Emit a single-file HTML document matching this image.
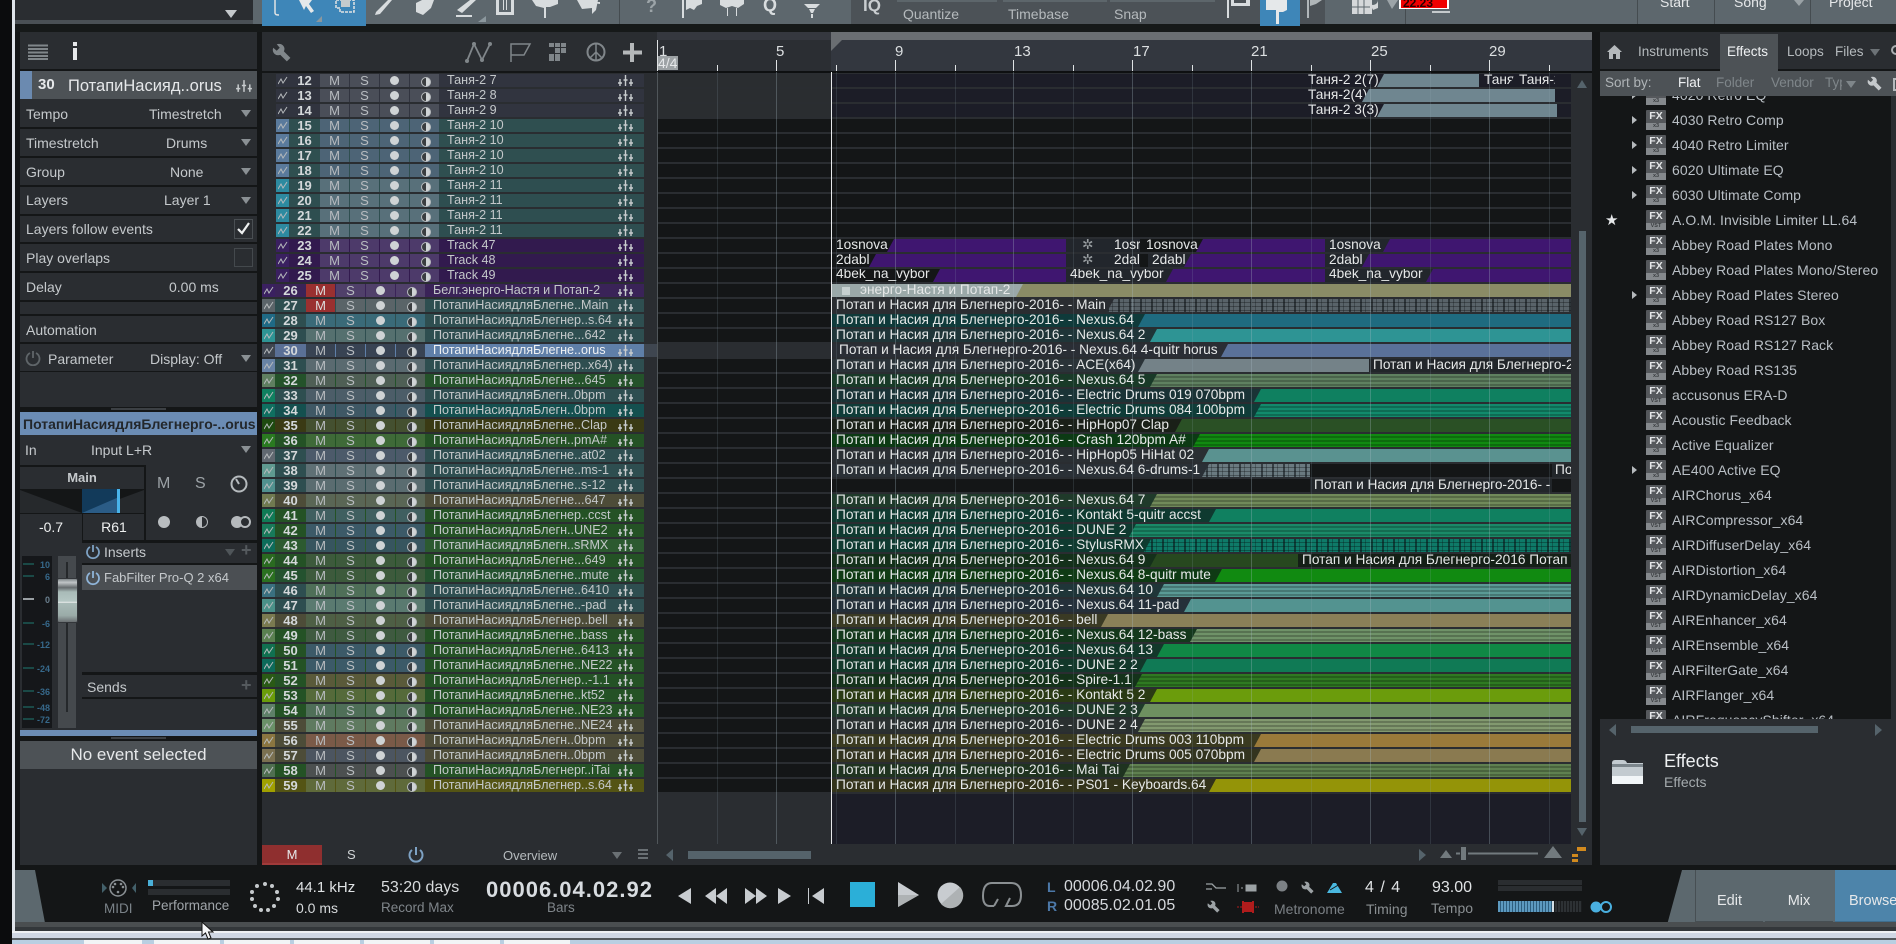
<!DOCTYPE html>
<html><head><meta charset="utf-8"><title>Studio One</title>
<style>
*{box-sizing:border-box;margin:0;padding:0}
html,body{width:1896px;height:944px;overflow:hidden;background:#141617;font-family:"Liberation Sans","DejaVu Sans",sans-serif;color:#c5c9cc}
.a{position:absolute}
#app{position:absolute;left:0;top:0;width:1896px;height:944px;overflow:hidden;background:#141617}
.lbl{position:absolute;white-space:nowrap;font-size:14px;line-height:16px}
.sep{position:absolute;left:20px;width:237px;height:2px;background:#141617}
.dd{position:absolute;width:0;height:0;border-left:5px solid transparent;border-right:5px solid transparent;border-top:7px solid #8a9094}
/* tracks */
.r{position:absolute;height:13px;display:flex;font-size:12.6px;line-height:13px;color:#c4c8ca;left:262px;width:382px;background:var(--n)}
.r.in{left:276px;width:368px}
.r i{display:block;width:13px;background:var(--i);position:relative}
.r i svg{position:absolute;left:2px;top:2px;width:10px;height:9px}
.r b{display:block;width:31px;text-align:center;font-size:13px;font-weight:bold;color:#d4d8da}
.r u{display:block;width:29px;margin-right:1px;background:var(--b);text-align:center;text-decoration:none;font-size:13px;position:relative;color:#b8bcc0}
.r u.rd{background:#9a3030;color:#ddd}
.r u.d:after{content:"";position:absolute;left:10px;top:2px;width:9px;height:9px;border-radius:50%;background:#cfd3d5}
.r u.h:after{content:"";position:absolute;left:11px;top:3px;width:8px;height:8px;border-radius:50%;border:1px solid #b9bdc0;background:linear-gradient(90deg,#3a3d40 50%,#d0d4d6 50%)}
.r span{display:block;flex:1;padding-left:7px;white-space:nowrap;overflow:hidden;margin-right:22px}
.r svg.m{position:absolute;right:10px;top:0;width:17px;height:13px}
/* clips */
.c{position:absolute;height:13px;overflow:hidden}
.c p{position:absolute;left:0;top:0;height:13px;padding-left:4px;font-size:13.7px;line-height:12px;color:#e6e8e8;white-space:nowrap;overflow:hidden;clip-path:polygon(0 0,100% 0,calc(100% - 7px) 100%,0 100%)}
.st{background-image:repeating-linear-gradient(180deg,rgba(0,0,0,0) 0 2px,rgba(0,0,0,.22) 2px 4px)}
.no{background-image:repeating-linear-gradient(90deg,rgba(10,15,18,.55) 0 2px,rgba(0,0,0,0) 2px 5px,rgba(10,15,18,.3) 5px 6px,rgba(0,0,0,0) 6px 11px),repeating-linear-gradient(180deg,rgba(0,0,0,0) 0 3px,rgba(0,0,0,.3) 3px 4px)}
.g{position:absolute;top:72px;width:1px;height:772px;background:rgba(170,190,200,.3)}
.g.h{background:rgba(150,175,185,.16)}
.t{position:absolute;top:40px;width:1px;background:#dfe2e4}
.tx{position:absolute;top:43px;font-size:15px;line-height:18px;color:#dcdfe1}
/* browser */
#list{position:absolute;left:1600px;top:96px;width:291px;height:623px;overflow:hidden;background:#141617}
.it{position:relative;height:25px;padding-left:72px;font-size:14px;letter-spacing:.08px;line-height:25px;color:#b9bfc5;white-space:nowrap}
.fx{position:absolute;left:46px;top:2px;width:20px;height:20px;background:#55585c;font:bold 10.5px/12px "Liberation Sans",sans-serif;color:#e6e8ea;text-align:center;display:block;font-style:normal;border-radius:1px;letter-spacing:0}
.fx s{position:absolute;left:0;bottom:0;width:20px;height:7px;background:#85898d;font:bold 5.5px/7px "Liberation Sans",sans-serif;color:#3a3d40;text-decoration:none}
.it.ar:before{content:"";position:absolute;left:32px;top:8px;border-left:5px solid #b5b9bc;border-top:4px solid transparent;border-bottom:4px solid transparent}
.hd{font-size:13.5px;position:absolute;top:44px;line-height:16px;white-space:nowrap}
.so{font-size:13.5px;position:absolute;top:75px;line-height:16px;color:#7f868a;white-space:nowrap}
.tr{position:absolute;white-space:nowrap;line-height:16px}
.vb{position:absolute;top:870px;height:55px;background:#5c686e;color:#e6e8ea;font-size:14.5px;line-height:62px;text-align:center;border-bottom:4px solid #474f53}
</style></head><body>
<div id="app">
<svg width="0" height="0" style="position:absolute"><defs>
<symbol id="w" viewBox="0 0 10 9"><path d="M0 8 L3 3 L5 7 L9 1" fill="none" stroke="#b5b9bb" stroke-width="1"/></symbol>
<symbol id="mt" viewBox="0 0 17 13"><path d="M3 12V5M8.500 12V1M14 12V5M1 9H5M6.500 6H10.500M12 9H16" fill="none" stroke="#c8ccce" stroke-width="1.400"/></symbol>
<symbol id="wr" viewBox="0 0 16 16"><path d="M1 4L4 6.500 6.500 4 4 1Q8 0 10 3 11 5 10 7L15.500 12.500 12.500 15.500 7 10Q4 11 2 9 0 7 1 4Z"/></symbol>
</defs></svg>

<!-- window frame -->
<div class="a" style="left:0;top:0;width:12px;height:944px;background:#0b0c0d"></div>
<div class="a" style="left:12px;top:0;width:3px;height:932px;background:#dfe4ea"></div>
<div class="a" style="left:15px;top:24px;width:1881px;height:8px;background:#161919"></div>

<!-- top bar -->
<div class="a" style="left:15px;top:0;width:1881px;height:24px;background:#5d676d"></div>
<div class="a" style="left:15px;top:0;width:238px;height:20px;background:#2a2d31"></div>
<div class="a" style="left:15px;top:20px;width:238px;height:4px;background:#4a5055"></div>
<div class="dd" style="left:225px;top:10px;border-left-width:6px;border-right-width:6px;border-top:8px solid #c5c9cc"></div>
<div class="a" style="left:262px;top:0;width:104px;height:26px;background:#3e86b8"></div>
<div class="a" style="left:851px;top:0;width:474px;height:24px;background:#4c5257"></div>
<div class="a" style="left:1260px;top:0;width:40px;height:26px;background:#3e86b8"></div>
<div class="a" style="left:619px;top:0;width:1px;height:24px;background:#454c50"></div>
<div class="a" style="left:1405px;top:0;width:1px;height:24px;background:#454c50"></div>
<div class="a" style="left:1637px;top:0;width:1px;height:24px;background:#454c50"></div>
<div class="a" style="left:1714px;top:0;width:1px;height:24px;background:#454c50"></div>
<div class="a" style="left:1810px;top:0;width:1px;height:24px;background:#454c50"></div>
<div class="a" style="left:897px;top:0;width:100px;height:2px;background:#5d666b"></div>
<div class="a" style="left:1003px;top:0;width:104px;height:2px;background:#5d666b"></div>
<div class="a" style="left:1110px;top:0;width:105px;height:2px;background:#5d666b"></div>
<svg class="a" style="left:0;top:0" width="1896" height="32" viewBox="0 0 1896 32">
<g fill="#d8dcde" stroke="none">
<path d="M299 0H312L309 4 314 11 311 13 306 6 304 10Z" fill="#e6e9ea"/>
<path d="M336 0H354V12H340V8H336Z" fill="none" stroke="#e0e3e4" stroke-width="1.500" stroke-dasharray="3 1"/>
<path d="M341 0H350V7H341Z" fill="#c5cbcd"/>
<path d="M316 22L322 16V22Z" fill="#8b979d"/>
<path d="M376 12L388 0H392L380 14 375 15Z"/>
<path d="M416 3L422 0H434L431 8 423 15 416 12Z"/>
<path d="M457 10L470 0H476L462 13ZM456 15H472V17H456Z"/>
<path d="M478 22L486 16V22Z" fill="#8b979d"/>
<path d="M496 0H514V15H496ZM499 0V12H511V0Z" fill-rule="evenodd"/><path d="M503 0H504V10H503ZM506 0H507V10H506Z"/>
<path d="M532 0H558V4L550 7H546V18H544V8L536 6Z"/>
<path d="M577 0H598L596 10 592 14V8L582 9Z"/><path d="M586 2H600V4Z"/>
<text x="646" y="12" font-family="Liberation Sans" font-size="18" font-weight="bold" fill="#9ca4a8">?</text>
<path d="M682 0H684V18H682ZM686 0H702V4L697 6 694 10 690 8 686 10Z"/>
<path d="M720 0H744V4L738 8 732 6 726 8 720 5Z"/><path d="M727 8H728V16H727ZM736 8H737V16H736Z"/>
<text x="763" y="11" font-family="Liberation Sans" font-size="18" font-weight="bold" fill="#d8dcde">Q</text>
<path d="M804 4H820L816 8H808ZM809 9H815L813 13H811ZM811 14H813V18H811Z"/>
<text x="863" y="11" font-family="Liberation Sans" font-size="17" font-weight="bold" fill="#c9cdd0">IQ</text>
<path d="M1227 0H1229V18H1227ZM1231 0H1250V6H1231ZM1234 0H1246V3H1234Z" fill-rule="evenodd"/>
<path d="M1266 0H1287V10L1283 12H1279V24H1276V10H1266Z" fill="#e5e8ea"/>
<path d="M1307 0H1309V18H1307ZM1310 0H1322L1316 4 1310 6Z" fill="#b0b6b9"/>
<path d="M1352 0H1372V14H1352Z" fill="#d5d8da"/><path d="M1358 0V14M1364 0V14M1352 7H1370" stroke="#5d676d" fill="none"/>
<path d="M1368 0A5 5 0 0 0 1378 0V8L1373 10Z" fill="#d5d8da"/>
<path d="M1387 0H1398L1392 9Z" fill="#9ca4a8"/>
</g>
<path d="M275 0V13Q275 15 279 15" fill="none" stroke="#e0e3e4" stroke-width="1.500"/>
<rect x="1399" y="0" width="50" height="9" fill="#fff"/><rect x="1401" y="0" width="46" height="8" fill="#f00000"/>
<text x="1403" y="7" font-family="Liberation Sans" font-size="12" font-weight="bold" fill="#2a0000">22.23</text>
<rect x="1432" y="11" width="18" height="2" fill="#c5cacc"/>
</svg>
<div class="tr" style="left:903px;top:6px;font-size:14px;color:#b5babd">Quantize</div>
<div class="tr" style="left:1008px;top:6px;font-size:14px;color:#b5babd">Timebase</div>
<div class="tr" style="left:1114px;top:6px;font-size:14px;color:#b5babd">Snap</div>
<div class="tr" style="left:1660px;top:-6px;font-size:14px;color:#e6e8ea">Start</div>
<div class="tr" style="left:1734px;top:-6px;font-size:14px;color:#e6e8ea">Song</div>
<div class="dd" style="left:1794px;top:0;border-top:6px solid #9aa2a6"></div>
<div class="tr" style="left:1829px;top:-6px;font-size:14px;color:#e6e8ea">Project</div>

<!-- left inspector -->
<div class="a" style="left:20px;top:32px;width:237px;height:833px;background:#2a2d31"></div>
<svg class="a" style="left:20px;top:40px" width="70" height="24" viewBox="0 0 70 24"><path d="M8 5.500H28M8 9H28M8 12.500H28M8 16H28M8 19H28" stroke="#80868a" stroke-width="2"/><rect x="53" y="2" width="4" height="4" fill="#e6e8ea"/><rect x="53" y="8" width="4" height="12" fill="#e6e8ea"/></svg>
<div class="a" style="left:20px;top:69px;width:237px;height:2px;background:#141617"></div>
<div class="a" style="left:20px;top:71px;width:237px;height:28px;background:#4d5256"></div>
<div class="a" style="left:20px;top:71px;width:12px;height:28px;background:#6b8ab0"></div>
<div class="tr" style="left:38px;top:77px;font-size:15px;font-weight:bold;color:#e6e8ea">30</div>
<div class="tr" style="left:68px;top:78px;font-size:16.500px;color:#e6e8ea">ПотапиНасияд..orus</div>
<svg class="a" style="left:235px;top:79px" width="18" height="14"><use href="#mt"/></svg>

<div class="lbl" style="left:26px;top:106px">Tempo</div><div class="lbl" style="left:149px;top:106px">Timestretch</div><div class="dd" style="left:241px;top:110px"></div>
<div class="sep" style="top:127px"></div>
<div class="lbl" style="left:26px;top:135px">Timestretch</div><div class="lbl" style="left:166px;top:135px">Drums</div><div class="dd" style="left:241px;top:139px"></div>
<div class="sep" style="top:156px"></div>
<div class="lbl" style="left:26px;top:164px">Group</div><div class="lbl" style="left:170px;top:164px">None</div><div class="dd" style="left:241px;top:168px"></div>
<div class="sep" style="top:185px"></div>
<div class="lbl" style="left:26px;top:192px">Layers</div><div class="lbl" style="left:164px;top:192px">Layer 1</div><div class="dd" style="left:241px;top:197px"></div>
<div class="sep" style="top:214px"></div>
<div class="lbl" style="left:26px;top:221px">Layers follow events</div>
<div class="a" style="left:234px;top:219px;width:19px;height:20px;border:1px solid #4a4f53"></div>
<svg class="a" style="left:236px;top:221px" width="15" height="15"><path d="M2 8L6 12 13 2" fill="none" stroke="#eef0f0" stroke-width="2.200"/></svg>
<div class="sep" style="top:242px"></div>
<div class="lbl" style="left:26px;top:250px">Play overlaps</div>
<div class="a" style="left:234px;top:248px;width:19px;height:19px;border:1px solid #44494d"></div>
<div class="sep" style="top:271px"></div>
<div class="lbl" style="left:26px;top:279px">Delay</div><div class="lbl" style="left:169px;top:279px">0.00 ms</div>
<div class="sep" style="top:300px"></div>
<div class="sep" style="top:314px"></div>
<div class="lbl" style="left:26px;top:322px">Automation</div>
<div class="sep" style="top:342px"></div>
<svg class="a" style="left:25px;top:350px" width="16" height="16"><path d="M5 3A6.500 6.500 0 1 0 11 3M8 1V8" fill="none" stroke="#5f6569" stroke-width="1.800"/></svg>
<div class="lbl" style="left:48px;top:351px">Parameter</div><div class="lbl" style="left:150px;top:351px">Display: Off</div><div class="dd" style="left:241px;top:355px"></div>
<div class="sep" style="top:371px;height:1px"></div>
<div class="a" style="left:20px;top:407px;width:237px;height:5px;background:#141617"></div>
<div class="a" style="left:111px;top:408px;width:55px;height:2px;background:#3c4044"></div>
<div class="a" style="left:20px;top:412px;width:237px;height:23px;background:#6b8cb4"></div>
<div class="tr" style="left:23px;top:416px;width:232px;font-size:14px;font-weight:bold;color:#23272b;overflow:hidden">ПотапиНасиядляБлегнерго-..orus</div>
<div class="lbl" style="left:25px;top:442px">In</div><div class="lbl" style="left:91px;top:442px">Input L+R</div><div class="dd" style="left:241px;top:446px"></div>
<div class="a" style="left:20px;top:465px;width:126px;height:76px;border-right:2px solid #141617;border-top:2px solid #141617"></div>
<div class="tr" style="left:20px;top:470px;width:124px;text-align:center;font-size:13px;font-weight:bold">Main</div>
<svg class="a" style="left:20px;top:489px" width="125" height="25"><rect width="125" height="25" fill="#141617"/><path d="M0 1L62 24H0Z" fill="#26292c"/><path d="M124 1L62 24H124Z" fill="#26292c"/><rect x="62" width="37" height="24" fill="#123a5a"/><path d="M62 24L99 8V24Z" fill="#2b5c86"/><rect x="97" width="3" height="24" fill="#48b3ea"/></svg>
<div class="a" style="left:82px;top:513px;width:1px;height:28px;background:#141617"></div>
<div class="tr" style="left:20px;top:519px;width:62px;text-align:center;font-size:14px;color:#eef0f0">-0.7</div>
<div class="tr" style="left:83px;top:519px;width:62px;text-align:center;font-size:14px;color:#eef0f0">R61</div>
<div class="tr" style="left:157px;top:476px;font-size:16px;color:#9ca2a6">M</div>
<div class="tr" style="left:195px;top:476px;font-size:16px;color:#9ca2a6">S</div>
<svg class="a" style="left:229px;top:474px" width="20" height="20"><circle cx="10" cy="10" r="7.500" fill="none" stroke="#b5babd" stroke-width="2"/><path d="M10 10L7 5" stroke="#b5babd" stroke-width="2"/></svg>
<svg class="a" style="left:155px;top:512px" width="100" height="20"><circle cx="9" cy="10" r="6" fill="#b9bdc0"/><circle cx="47" cy="10" r="5.500" fill="#2a2d31" stroke="#b5b9bc"/><path d="M47 4.500A5.500 5.500 0 0 0 47 15.500Z" fill="#b5b9bc"/><circle cx="82" cy="10" r="6" fill="#b5b9bc"/><circle cx="90" cy="10" r="5" fill="#2a2d31" stroke="#b5b9bc" stroke-width="2"/></svg>
<div class="a" style="left:82px;top:540px;width:175px;height:3px;background:#141617"></div>
<svg class="a" style="left:85px;top:544px" width="16" height="16"><path d="M5 3A6 6 0 1 0 11 3M8 1V8" fill="none" stroke="#7ea2c4" stroke-width="1.800"/></svg>
<div class="lbl" style="left:104px;top:544px">Inserts</div>
<div class="dd" style="left:225px;top:549px;border-top-color:#4f5559"></div>
<div class="tr" style="left:241px;top:542px;font-size:18px;font-weight:bold;color:#555a5e">+</div>
<div class="a" style="left:82px;top:563px;width:175px;height:2px;background:#141617"></div>
<div class="a" style="left:82px;top:565px;width:175px;height:25px;background:#4b4f53"></div>
<svg class="a" style="left:85px;top:570px" width="16" height="16"><path d="M5 3A6 6 0 1 0 11 3M8 1V8" fill="none" stroke="#8fb4d8" stroke-width="1.800"/></svg>
<div class="lbl" style="left:104px;top:570px;font-size:13px">FabFilter Pro-Q 2 x64</div>
<div class="a" style="left:82px;top:672px;width:175px;height:3px;background:#141617"></div>
<div class="lbl" style="left:87px;top:679px">Sends</div>
<div class="tr" style="left:241px;top:677px;font-size:18px;font-weight:bold;color:#555a5e">+</div>
<div class="a" style="left:82px;top:697px;width:175px;height:2px;background:#141617"></div>

<!-- fader -->
<div class="a" style="left:22px;top:556px;width:30px;height:172px;background:#15171a"></div>
<div class="a" style="left:58px;top:556px;width:18px;height:172px;background:#45494d"></div>
<div class="a" style="left:66px;top:562px;width:2px;height:150px;background:#25282b"></div>
<svg class="a" style="left:22px;top:556px" width="30" height="172"><g stroke="#1d5a55" stroke-width="1.500"><path d="M1 8H12M1 20H12M1 43H12M1 67H12M1 88H12M1 112H12M1 135H12M1 151H12M1 163H12"/></g><path d="M1 43H12" stroke="#9aa0a4" stroke-width="2"/><g font-family="Liberation Sans" font-size="9" font-weight="bold" fill="#36688a" text-anchor="end"><text x="28" y="12">10</text><text x="28" y="24">6</text><text x="28" y="47" fill="#6a7f8e">0</text><text x="28" y="71">-6</text><text x="28" y="92">-12</text><text x="28" y="116">-24</text><text x="28" y="139">-36</text><text x="28" y="155">-48</text><text x="28" y="167">-72</text></g></svg>
<div class="a" style="left:57px;top:578px;width:21px;height:45px;border-radius:2px;background:linear-gradient(180deg,#7f8588 0,#c0c5c7 8%,#666b6e 20%,#a9bbb8 30%,#b5c7c4 52%,#f0f2f2 54%,#a9bbb8 56%,#9aaba8 85%,#6a6f72 100%);border:1px solid #33363a"></div>
<div class="a" style="left:20px;top:730px;width:237px;height:6px;background:#6b8cb4"></div>
<div class="a" style="left:20px;top:736px;width:237px;height:5px;background:#141617"></div>
<div class="a" style="left:111px;top:737px;width:55px;height:2px;background:#3c4044"></div>
<div class="a" style="left:20px;top:741px;width:237px;height:28px;background:#4d5256"></div>
<div class="tr" style="left:20px;top:747px;width:237px;text-align:center;font-size:17px;color:#e6e8ea">No event selected</div>

<!-- track column -->
<div class="a" style="left:262px;top:32px;width:395px;height:833px;background:#2a2d31"></div>
<div class="a" style="left:262px;top:71px;width:395px;height:2px;background:#141617"></div>
<svg class="a" style="left:272px;top:43px;fill:#80868a" width="19" height="19"><use href="#wr"/></svg>
<svg class="a" style="left:262px;top:38px" width="395" height="30" viewBox="262 38 395 30"><g fill="none" stroke="#80868a" stroke-width="2"><path d="M467 61L474 44 482 60 490 44" stroke-width="1.800"/><path d="M511 62V44H530L524 55H511" stroke-width="1.500"/><circle cx="596" cy="52" r="8.500" stroke-width="2"/><path d="M596 44V60M596 52L590 58M596 52L602 58" stroke-width="1.500"/></g><g fill="#80868a"><circle cx="474" cy="44" r="2"/><circle cx="467" cy="61" r="2"/><circle cx="482" cy="60" r="2"/><circle cx="490" cy="44" r="2"/><rect x="549" y="43" width="5" height="4"/><rect x="555" y="43" width="5" height="4"/><rect x="561" y="43" width="5" height="4"/><rect x="555" y="48" width="5" height="5"/><rect x="561" y="48" width="5" height="5"/><rect x="549" y="54" width="5" height="7"/><rect x="555" y="54" width="5" height="7"/></g><path d="M632 43V62M623 52.500H642" stroke="#b5b8ba" stroke-width="4"/></svg>

<div class="r in" style="top:74px;--n:#31343f;--b:#4a4e58;--i:#31343f"><i><svg><use href="#w"/></svg></i><b>12</b><u>M</u><u>S</u><u class="d"></u><u class="h"></u><span>Таня-2 7</span><svg class="m"><use href="#mt"/></svg></div>
<div class="r in" style="top:89px;--n:#31343f;--b:#4a4e58;--i:#31343f"><i><svg><use href="#w"/></svg></i><b>13</b><u>M</u><u>S</u><u class="d"></u><u class="h"></u><span>Таня-2 8</span><svg class="m"><use href="#mt"/></svg></div>
<div class="r in" style="top:104px;--n:#31343f;--b:#4a4e58;--i:#31343f"><i><svg><use href="#w"/></svg></i><b>14</b><u>M</u><u>S</u><u class="d"></u><u class="h"></u><span>Таня-2 9</span><svg class="m"><use href="#mt"/></svg></div>
<div class="r in" style="top:119px;--n:#2f4f50;--b:#4d6476;--i:#5a7a9c"><i><svg><use href="#w"/></svg></i><b>15</b><u>M</u><u>S</u><u class="d"></u><u class="h"></u><span>Таня-2 10</span><svg class="m"><use href="#mt"/></svg></div>
<div class="r in" style="top:134px;--n:#2f4f50;--b:#4d6476;--i:#5a7a9c"><i><svg><use href="#w"/></svg></i><b>16</b><u>M</u><u>S</u><u class="d"></u><u class="h"></u><span>Таня-2 10</span><svg class="m"><use href="#mt"/></svg></div>
<div class="r in" style="top:149px;--n:#2f4f50;--b:#4d6476;--i:#5a7a9c"><i><svg><use href="#w"/></svg></i><b>17</b><u>M</u><u>S</u><u class="d"></u><u class="h"></u><span>Таня-2 10</span><svg class="m"><use href="#mt"/></svg></div>
<div class="r in" style="top:164px;--n:#2f4f50;--b:#4d6476;--i:#5a7a9c"><i><svg><use href="#w"/></svg></i><b>18</b><u>M</u><u>S</u><u class="d"></u><u class="h"></u><span>Таня-2 10</span><svg class="m"><use href="#mt"/></svg></div>
<div class="r in" style="top:179px;--n:#2e4e50;--b:#58707a;--i:#2d8aa0"><i><svg><use href="#w"/></svg></i><b>19</b><u>M</u><u>S</u><u class="d"></u><u class="h"></u><span>Таня-2 11</span><svg class="m"><use href="#mt"/></svg></div>
<div class="r in" style="top:194px;--n:#2e4e50;--b:#58707a;--i:#2d8aa0"><i><svg><use href="#w"/></svg></i><b>20</b><u>M</u><u>S</u><u class="d"></u><u class="h"></u><span>Таня-2 11</span><svg class="m"><use href="#mt"/></svg></div>
<div class="r in" style="top:209px;--n:#2e4e50;--b:#58707a;--i:#2d8aa0"><i><svg><use href="#w"/></svg></i><b>21</b><u>M</u><u>S</u><u class="d"></u><u class="h"></u><span>Таня-2 11</span><svg class="m"><use href="#mt"/></svg></div>
<div class="r in" style="top:224px;--n:#2e4e50;--b:#58707a;--i:#2d8aa0"><i><svg><use href="#w"/></svg></i><b>22</b><u>M</u><u>S</u><u class="d"></u><u class="h"></u><span>Таня-2 11</span><svg class="m"><use href="#mt"/></svg></div>
<div class="r in" style="top:239px;--n:#321a4e;--b:#4d3a6a;--i:#3a2060"><i><svg><use href="#w"/></svg></i><b>23</b><u>M</u><u>S</u><u class="d"></u><u class="h"></u><span>Track 47</span><svg class="m"><use href="#mt"/></svg></div>
<div class="r in" style="top:254px;--n:#321a4e;--b:#4d3a6a;--i:#3a2060"><i><svg><use href="#w"/></svg></i><b>24</b><u>M</u><u>S</u><u class="d"></u><u class="h"></u><span>Track 48</span><svg class="m"><use href="#mt"/></svg></div>
<div class="r in" style="top:269px;--n:#321a4e;--b:#4d3a6a;--i:#3a2060"><i><svg><use href="#w"/></svg></i><b>25</b><u>M</u><u>S</u><u class="d"></u><u class="h"></u><span>Track 49</span><svg class="m"><use href="#mt"/></svg></div>
<div class="r" style="top:284px;--n:#3a2358;--b:#50406a;--i:#3a2060"><i><svg><use href="#w"/></svg></i><b>26</b><u class="rd">M</u><u>S</u><u class="d"></u><u class="h"></u><span>Белг.энерго-Настя и Потап-2</span><svg class="m"><use href="#mt"/></svg></div>
<div class="r" style="top:299px;--n:#2e4e50;--b:#5a6468;--i:#5b6469"><i><svg><use href="#w"/></svg></i><b>27</b><u class="rd">M</u><u>S</u><u class="d"></u><u class="h"></u><span>ПотапиНасиядляБлегне..Main</span><svg class="m"><use href="#mt"/></svg></div>
<div class="r" style="top:314px;--n:#2e4e50;--b:#3a6a78;--i:#1f6a85"><i><svg><use href="#w"/></svg></i><b>28</b><u>M</u><u>S</u><u class="d"></u><u class="h"></u><span>ПотапиНасиядляБлегнер..s.64</span><svg class="m"><use href="#mt"/></svg></div>
<div class="r" style="top:329px;--n:#2e4e50;--b:#55706f;--i:#2e9494"><i><svg><use href="#w"/></svg></i><b>29</b><u>M</u><u>S</u><u class="d"></u><u class="h"></u><span>ПотапиНасиядляБлегне...642</span><svg class="m"><use href="#mt"/></svg></div>
<div class="r" style="top:344px;--n:#5f7fa8;--b:#384353;--i:#3f4650"><i><svg><use href="#w"/></svg></i><b style="background:#5a7096">30</b><u>M</u><u>S</u><u class="d"></u><u class="h"></u><span style="color:#f0f2f4">ПотапиНасиядляБлегне..orus</span><svg class="m"><use href="#mt"/></svg></div>
<div class="a" style="left:644px;top:344px;width:13px;height:13px;background:#3f4650"></div>
<div class="r" style="top:359px;--n:#2e4e50;--b:#5a6a70;--i:#6883a5"><i><svg><use href="#w"/></svg></i><b>31</b><u>M</u><u>S</u><u class="d"></u><u class="h"></u><span>ПотапиНасиядляБлегнер..x64)</span><svg class="m"><use href="#mt"/></svg></div>
<div class="r" style="top:374px;--n:#24522a;--b:#4f5f55;--i:#5f7f60"><i><svg><use href="#w"/></svg></i><b>32</b><u>M</u><u>S</u><u class="d"></u><u class="h"></u><span>ПотапиНасиядляБлегне...645</span><svg class="m"><use href="#mt"/></svg></div>
<div class="r" style="top:389px;--n:#2e4e50;--b:#4c5d68;--i:#108060"><i><svg><use href="#w"/></svg></i><b>33</b><u>M</u><u>S</u><u class="d"></u><u class="h"></u><span>ПотапиНасиядляБлегн..0bpm</span><svg class="m"><use href="#mt"/></svg></div>
<div class="r" style="top:404px;--n:#14504f;--b:#3f5865;--i:#0f6f60"><i><svg><use href="#w"/></svg></i><b>34</b><u>M</u><u>S</u><u class="d"></u><u class="h"></u><span>ПотапиНасиядляБлегн..0bpm</span><svg class="m"><use href="#mt"/></svg></div>
<div class="r" style="top:419px;--n:#3a3a14;--b:#445030;--i:#1e4a10"><i><svg><use href="#w"/></svg></i><b>35</b><u>M</u><u>S</u><u class="d"></u><u class="h"></u><span>ПотапиНасиядляБлегне..Clap</span><svg class="m"><use href="#mt"/></svg></div>
<div class="r" style="top:434px;--n:#245225;--b:#3f6a38;--i:#2a7a20"><i><svg><use href="#w"/></svg></i><b>36</b><u>M</u><u>S</u><u class="d"></u><u class="h"></u><span>ПотапиНасиядляБлегн..pmA#</span><svg class="m"><use href="#mt"/></svg></div>
<div class="r" style="top:449px;--n:#2e4e50;--b:#4c5a6a;--i:#606870"><i><svg><use href="#w"/></svg></i><b>37</b><u>M</u><u>S</u><u class="d"></u><u class="h"></u><span>ПотапиНасиядляБлегне..at02</span><svg class="m"><use href="#mt"/></svg></div>
<div class="r" style="top:464px;--n:#2e4e50;--b:#5f7075;--i:#5f9a90"><i><svg><use href="#w"/></svg></i><b>38</b><u>M</u><u>S</u><u class="d"></u><u class="h"></u><span>ПотапиНасиядляБлегне..ms-1</span><svg class="m"><use href="#mt"/></svg></div>
<div class="r" style="top:479px;--n:#2e4e50;--b:#5a6c70;--i:#50908e"><i><svg><use href="#w"/></svg></i><b>39</b><u>M</u><u>S</u><u class="d"></u><u class="h"></u><span>ПотапиНасиядляБлегне..s-12</span><svg class="m"><use href="#mt"/></svg></div>
<div class="r" style="top:494px;--n:#4d4c38;--b:#5a6655;--i:#707a50"><i><svg><use href="#w"/></svg></i><b>40</b><u>M</u><u>S</u><u class="d"></u><u class="h"></u><span>ПотапиНасиядляБлегне...647</span><svg class="m"><use href="#mt"/></svg></div>
<div class="r" style="top:509px;--n:#245225;--b:#405f60;--i:#107a55"><i><svg><use href="#w"/></svg></i><b>41</b><u>M</u><u>S</u><u class="d"></u><u class="h"></u><span>ПотапиНасиядляБлегнер..ccst</span><svg class="m"><use href="#mt"/></svg></div>
<div class="r" style="top:524px;--n:#245225;--b:#3c5a68;--i:#187a5a"><i><svg><use href="#w"/></svg></i><b>42</b><u>M</u><u>S</u><u class="d"></u><u class="h"></u><span>ПотапиНасиядляБлегн..UNE2</span><svg class="m"><use href="#mt"/></svg></div>
<div class="r" style="top:539px;--n:#2c5a30;--b:#37555f;--i:#0d6c5a"><i><svg><use href="#w"/></svg></i><b>43</b><u>M</u><u>S</u><u class="d"></u><u class="h"></u><span>ПотапиНасиядляБлегн..sRMX</span><svg class="m"><use href="#mt"/></svg></div>
<div class="r" style="top:554px;--n:#245225;--b:#3d5a3c;--i:#2a6a20"><i><svg><use href="#w"/></svg></i><b>44</b><u>M</u><u>S</u><u class="d"></u><u class="h"></u><span>ПотапиНасиядляБлегне...649</span><svg class="m"><use href="#mt"/></svg></div>
<div class="r" style="top:569px;--n:#24522f;--b:#3d5a3c;--i:#2a7020"><i><svg><use href="#w"/></svg></i><b>45</b><u>M</u><u>S</u><u class="d"></u><u class="h"></u><span>ПотапиНасиядляБлегне..mute</span><svg class="m"><use href="#mt"/></svg></div>
<div class="r" style="top:584px;--n:#2e4e50;--b:#4f6f58;--i:#3a7080"><i><svg><use href="#w"/></svg></i><b>46</b><u>M</u><u>S</u><u class="d"></u><u class="h"></u><span>ПотапиНасиядляБлегне..6410</span><svg class="m"><use href="#mt"/></svg></div>
<div class="r" style="top:599px;--n:#2e4e50;--b:#5a7a70;--i:#4a9088"><i><svg><use href="#w"/></svg></i><b>47</b><u>M</u><u>S</u><u class="d"></u><u class="h"></u><span>ПотапиНасиядляБлегне..-pad</span><svg class="m"><use href="#mt"/></svg></div>
<div class="r" style="top:614px;--n:#4d4c38;--b:#4e5f45;--i:#7a7a50"><i><svg><use href="#w"/></svg></i><b>48</b><u>M</u><u>S</u><u class="d"></u><u class="h"></u><span>ПотапиНасиядляБлегнер..bell</span><svg class="m"><use href="#mt"/></svg></div>
<div class="r" style="top:629px;--n:#245225;--b:#3f5a40;--i:#5a8050"><i><svg><use href="#w"/></svg></i><b>49</b><u>M</u><u>S</u><u class="d"></u><u class="h"></u><span>ПотапиНасиядляБлегне..bass</span><svg class="m"><use href="#mt"/></svg></div>
<div class="r" style="top:644px;--n:#245225;--b:#3c5a68;--i:#107050"><i><svg><use href="#w"/></svg></i><b>50</b><u>M</u><u>S</u><u class="d"></u><u class="h"></u><span>ПотапиНасиядляБлегне..6413</span><svg class="m"><use href="#mt"/></svg></div>
<div class="r" style="top:659px;--n:#245225;--b:#3c5a68;--i:#0d6a5a"><i><svg><use href="#w"/></svg></i><b>51</b><u>M</u><u>S</u><u class="d"></u><u class="h"></u><span>ПотапиНасиядляБлегне..NE22</span><svg class="m"><use href="#mt"/></svg></div>
<div class="r" style="top:674px;--n:#245225;--b:#5a5a3a;--i:#2a5a15"><i><svg><use href="#w"/></svg></i><b>52</b><u>M</u><u>S</u><u class="d"></u><u class="h"></u><span>ПотапиНасиядляБлегнер..-1.1</span><svg class="m"><use href="#mt"/></svg></div>
<div class="r" style="top:689px;--n:#245225;--b:#556a3a;--i:#6a9c0a"><i><svg><use href="#w"/></svg></i><b>53</b><u>M</u><u>S</u><u class="d"></u><u class="h"></u><span>ПотапиНасиядляБлегне..kt52</span><svg class="m"><use href="#mt"/></svg></div>
<div class="r" style="top:704px;--n:#245225;--b:#4f6f58;--i:#5e8068"><i><svg><use href="#w"/></svg></i><b>54</b><u>M</u><u>S</u><u class="d"></u><u class="h"></u><span>ПотапиНасиядляБлегне..NE23</span><svg class="m"><use href="#mt"/></svg></div>
<div class="r" style="top:719px;--n:#4d4c38;--b:#5f7a60;--i:#6a9068"><i><svg><use href="#w"/></svg></i><b>55</b><u>M</u><u>S</u><u class="d"></u><u class="h"></u><span>ПотапиНасиядляБлегне..NE24</span><svg class="m"><use href="#mt"/></svg></div>
<div class="r" style="top:734px;--n:#4d4c38;--b:#7a5a48;--i:#8a7540"><i><svg><use href="#w"/></svg></i><b>56</b><u>M</u><u>S</u><u class="d"></u><u class="h"></u><span>ПотапиНасиядляБлегн..0bpm</span><svg class="m"><use href="#mt"/></svg></div>
<div class="r" style="top:749px;--n:#4d4c38;--b:#4c5560;--i:#7a7050"><i><svg><use href="#w"/></svg></i><b>57</b><u>M</u><u>S</u><u class="d"></u><u class="h"></u><span>ПотапиНасиядляБлегн..0bpm</span><svg class="m"><use href="#mt"/></svg></div>
<div class="r" style="top:764px;--n:#245225;--b:#4c5050;--i:#4f6f50"><i><svg><use href="#w"/></svg></i><b>58</b><u>M</u><u>S</u><u class="d"></u><u class="h"></u><span>ПотапиНасиядляБлегнерг..iTai</span><svg class="m"><use href="#mt"/></svg></div>
<div class="r" style="top:779px;--n:#545414;--b:#5f6a3a;--i:#a0a000"><i><svg><use href="#w"/></svg></i><b>59</b><u>M</u><u>S</u><u class="d"></u><u class="h"></u><span>ПотапиНасиядляБлегнер..s.64</span><svg class="m"><use href="#mt"/></svg></div>

<!-- track column bottom -->
<div class="a" style="left:262px;top:845px;width:60px;height:20px;background:#8f2f2f;border-bottom:2px solid #a03a3a"></div>
<div class="tr" style="left:262px;top:847px;width:60px;text-align:center;font-size:13px;color:#e6e8ea">M</div>
<div class="tr" style="left:347px;top:847px;font-size:13px;color:#d0d4d6">S</div>
<svg class="a" style="left:408px;top:846px" width="16" height="17"><path d="M4 4A6.500 6.500 0 1 0 12 4M8 1V9" fill="none" stroke="#7ea2c4" stroke-width="2"/></svg>
<div class="tr" style="left:503px;top:848px;font-size:13px;color:#b5babd">Overview</div>
<div class="dd" style="left:612px;top:852px;border-top-color:#6a7074"></div>
<div class="a" style="left:638px;top:849px;width:10px;height:2px;background:#6a7074;box-shadow:0 4px 0 #6a7074,0 8px 0 #6a7074"></div>
<div class="a" style="left:257px;top:32px;width:5px;height:833px;background:#141617"></div>

<!-- arrange header -->
<div class="a" style="left:657px;top:32px;width:935px;height:39px;background:#33373f"></div>
<div class="a" style="left:657px;top:32px;width:174px;height:8px;background:#35383f"></div>
<div class="a" style="left:657px;top:40px;width:174px;height:31px;background:#2b2e33"></div>
<div class="a" style="left:831px;top:32px;width:761px;height:8px;background:#6a6e72"></div>
<svg class="a" style="left:831px;top:40px" width="12" height="12"><path d="M0 0H11L0 11Z" fill="#6a6e72"/></svg>
<div class="a" style="left:657px;top:71px;width:935px;height:2px;background:#0e1011"></div>
<div class="a" style="left:658px;top:56px;width:20px;height:14px;background:#9da2a5"></div>
<div class="tr" style="left:658px;top:55px;font-size:14px;color:#e6e8ea">4/4</div>
<div class="tx" style="left:659px">1</div><div class="tx" style="left:776px">5</div><div class="tx" style="left:895px">9</div><div class="tx" style="left:1014px">13</div><div class="tx" style="left:1133px">17</div><div class="tx" style="left:1251px">21</div><div class="tx" style="left:1371px">25</div><div class="tx" style="left:1489px">29</div>
<div class="t" style="left:657px;height:31px"></div>
<div class="t" style="left:776px;top:60px;height:11px"></div><div class="t" style="left:895px;top:60px;height:11px"></div><div class="t" style="left:1013px;top:60px;height:11px"></div><div class="t" style="left:1132px;top:60px;height:11px"></div><div class="t" style="left:1251px;top:60px;height:11px"></div><div class="t" style="left:1370px;top:60px;height:11px"></div><div class="t" style="left:1489px;top:60px;height:11px"></div>
<div class="t" style="left:717px;top:65px;height:6px"></div><div class="t" style="left:836px;top:65px;height:6px"></div><div class="t" style="left:955px;top:65px;height:6px"></div><div class="t" style="left:1073px;top:65px;height:6px"></div><div class="t" style="left:1192px;top:65px;height:6px"></div><div class="t" style="left:1311px;top:65px;height:6px"></div><div class="t" style="left:1430px;top:65px;height:6px"></div><div class="t" style="left:1549px;top:65px;height:6px"></div>

<!-- arrange background -->
<div class="a" style="left:657px;top:73px;width:914px;height:771px;background:#2a2d31"></div>
<div class="a" style="left:657px;top:74px;width:914px;height:720px;background:repeating-linear-gradient(180deg,#141617 0 13px,#2a2d31 13px 15px)"></div>
<div class="a" style="left:657px;top:74px;width:174px;height:13px;background:#2a2d30"></div><div class="a" style="left:657px;top:89px;width:174px;height:13px;background:#2a2d30"></div><div class="a" style="left:657px;top:104px;width:174px;height:13px;background:#2a2d30"></div>
<div class="a" style="left:831px;top:74px;width:740px;height:13px;background:#1c1d27"></div><div class="a" style="left:831px;top:89px;width:740px;height:13px;background:#1c1d27"></div><div class="a" style="left:831px;top:104px;width:740px;height:13px;background:#1c1d27"></div>
<div class="a" style="left:657px;top:344px;width:174px;height:13px;background:#2a2d31"></div>
<div class="a" style="left:657px;top:794px;width:174px;height:50px;background:#2a2d31"></div>
<div class="a" style="left:831px;top:794px;width:740px;height:50px;background:#1c1d27"></div>

<!-- clips -->
<div class="c" style="top:74px;left:1304px;width:175px;background:#6f8690"><p style="width:80px;background:#1c1d27">Таня-2 2(7)</p></div>
<div class="c" style="top:74px;left:1480px;width:35px;background:#1c1d27"><p style="width:35px;background:#1c1d27">Таня-2</p></div>
<div class="c" style="top:74px;left:1515px;width:40px;background:#1c1d27"><p style="width:40px;background:#1c1d27;clip-path:none">Таня-2</p></div>
<div class="c" style="top:89px;left:1304px;width:251px;background:#6f8690"><p style="width:65px;background:#1c1d27">Таня-2(4)</p></div>
<div class="c" style="top:104px;left:1304px;width:253px;background:#6f8690"><p style="width:80px;background:#1c1d27">Таня-2 3(3)</p></div>

<div class="c" style="top:239px;left:832px;width:234px;background:#3f1670"><p style="width:62px;background:#141617">1osnova</p></div>
<div class="c" style="top:239px;left:1066px;width:44px;background:#22262c"><p style="width:44px;background:#22262c;padding-left:16px;clip-path:none;color:#9a9fa2">✲</p></div>
<div class="c" style="top:239px;left:1110px;width:30px;background:#22262c"><p style="width:30px;background:#22262c;clip-path:none">1osr</p></div>
<div class="c" style="top:239px;left:1142px;width:183px;background:#3f1670"><p style="width:61px;background:#141617">1osnova</p></div>
<div class="c" style="top:239px;left:1325px;width:246px;background:#3f1670"><p style="width:65px;background:#22262c">1osnova</p></div>

<div class="c" style="top:254px;left:832px;width:234px;background:#3f1670"><p style="width:44px;background:#141617">2dabl</p></div>
<div class="c" style="top:254px;left:1066px;width:44px;background:#22262c"><p style="width:44px;background:#22262c;padding-left:16px;clip-path:none;color:#9a9fa2">✲</p></div>
<div class="c" style="top:254px;left:1110px;width:30px;background:#22262c"><p style="width:30px;background:#22262c;clip-path:none">2dal</p></div>
<div class="c" style="top:254px;left:1148px;width:177px;background:#3f1670"><p style="width:43px;background:#22262c">2dabl</p></div>
<div class="c" style="top:254px;left:1325px;width:246px;background:#3f1670"><p style="width:44px;background:#22262c">2dabl</p></div>

<div class="c" style="top:269px;left:832px;width:234px;background:#3f1670"><p style="width:108px;background:#141617;line-height:10px">4bek_na_vybor</p></div>
<div class="c" style="top:269px;left:1066px;width:259px;background:#3f1670"><p style="width:107px;background:#22262c;line-height:10px">4bek_na_vybor</p></div>
<div class="c" style="top:269px;left:1325px;width:246px;background:#3f1670"><p style="width:108px;background:#22262c;line-height:10px">4bek_na_vybor</p></div>

<div class="c" style="top:284px;left:832px;width:739px;background:#8a8c66"><p style="width:191px;background:#9aa8a8;padding-left:28px">энерго-Настя и Потап-2</p></div>
<div class="a" style="left:842px;top:287px;width:8px;height:8px;background:#c6d0d0"></div>
<div class="c no" style="top:299px;left:832px;width:739px;background-color:#596369"><p style="width:282px;background:#2a2d31">Потап и Насия для Блегнерго-2016- - Main</p></div>
<div class="c" style="top:314px;left:832px;width:739px;background:#1f6b80"><p style="width:313px;background:#0f3a3a">Потап и Насия для Блегнерго-2016- - Nexus.64</p></div>
<div class="c" style="top:329px;left:832px;width:739px;background:#2e9494"><p style="width:325px;background:#1f3538">Потап и Насия для Блегнерго-2016- - Nexus.64 2</p></div>
<div class="c" style="top:344px;left:832px;width:739px;background:#5a7199"><p style="width:396px;background:#2a2e35;padding-left:7px">Потап и Насия для Блегнерго-2016- - Nexus.64 4-quitr horus</p></div>
<div class="c" style="top:359px;left:832px;width:537px;background:#748288"><p style="width:313px;background:#2a3338">Потап и Насия для Блегнерго-2016- - ACE(x64)</p></div>
<div class="c" style="top:359px;left:1369px;width:202px;background:#22262a"><p style="width:202px;background:#22262a;clip-path:none">Потап и Насия для Блегнерго-2</p></div>
<div class="c st" style="top:374px;left:832px;width:739px;background-color:#5f8060"><p style="width:325px;background:#193a28">Потап и Насия для Блегнерго-2016- - Nexus.64 5</p></div>
<div class="c" style="top:389px;left:832px;width:739px;background:#0f8060"><p style="width:429px;background:#1a3336">Потап и Насия для Блегнерго-2016- - Electric Drums 019 070bpm</p></div>
<div class="c st" style="top:404px;left:832px;width:739px;background-color:#128a6c"><p style="width:429px;background:#0f3c38">Потап и Насия для Блегнерго-2016- - Electric Drums 084 100bpm</p></div>
<div class="c" style="top:419px;left:832px;width:739px;background:#2a5025"><p style="width:350px;background:#1a2018">Потап и Насия для Блегнерго-2016- - HipHop07 Clap</p></div>
<div class="c st" style="top:434px;left:832px;width:739px;background-color:#118a11"><p style="width:368px;background:#0c3a14">Потап и Насия для Блегнерго-2016- - Crash 120bpm A#</p></div>
<div class="c" style="top:449px;left:832px;width:739px;background:#5a9290"><p style="width:377px;background:#2a2f33">Потап и Насия для Блегнерго-2016- - HipHop05 HiHat 02</p></div>
<div class="c no" style="top:464px;left:832px;width:478px;background-color:#6a7a80"><p style="width:377px;background:#2a3036">Потап и Насия для Блегнерго-2016- - Nexus.64 6-drums-1</p></div>
<div class="c" style="top:464px;left:1552px;width:19px;background:#22262a"><p style="width:19px;background:#22262a;clip-path:none;padding-left:3px">По</p></div>
<div class="c" style="top:479px;left:1310px;width:242px;background:#22262a"><p style="width:242px;background:#22262a;clip-path:none">Потап и Насия для Блегнерго-2016- -</p></div>
<div class="c st" style="top:494px;left:832px;width:739px;background-color:#718a5a"><p style="width:325px;background:#1f3a2a">Потап и Насия для Блегнерго-2016- - Nexus.64 7</p></div>
<div class="c" style="top:509px;left:832px;width:739px;background:#108060"><p style="width:384px;background:#0f3a30">Потап и Насия для Блегнерго-2016- - Kontakt 5-quitr accst</p></div>
<div class="c st" style="top:524px;left:832px;width:739px;background-color:#1a8a68"><p style="width:304px;background:#0f3a30">Потап и Насия для Блегнерго-2016- - DUNE 2</p></div>
<div class="c no" style="top:539px;left:832px;width:739px;background-color:#0e7a68"><p style="width:319px;background:#0f3a30">Потап и Насия для Блегнерго-2016- - StylusRMX</p></div>
<div class="c" style="top:554px;left:832px;width:466px;background:#27481f"><p style="width:325px;background:#14301a">Потап и Насия для Блегнерго-2016- - Nexus.64 9</p></div>
<div class="c" style="top:554px;left:1298px;width:273px;background:#141f16"><p style="width:273px;background:#141f16;clip-path:none">Потап и Насия для Блегнерго-2016 Потап</p></div>
<div class="c" style="top:569px;left:832px;width:739px;background:#118a11"><p style="width:390px;background:#0f3a14">Потап и Насия для Блегнерго-2016- - Nexus.64 8-quitr mute</p></div>
<div class="c st" style="top:584px;left:832px;width:739px;background-color:#5a9a95"><p style="width:332px;background:#1f3538">Потап и Насия для Блегнерго-2016- - Nexus.64 10</p></div>
<div class="c" style="top:599px;left:832px;width:739px;background:#539390"><p style="width:359px;background:#25303a">Потап и Насия для Блегнерго-2016- - Nexus.64 11-pad</p></div>
<div class="c" style="top:614px;left:832px;width:739px;background:#8a8058"><p style="width:276px;background:#3a3a24">Потап и Насия для Блегнерго-2016- - bell</p></div>
<div class="c st" style="top:629px;left:832px;width:739px;background-color:#6f9268"><p style="width:365px;background:#14381c">Потап и Насия для Блегнерго-2016- - Nexus.64 12-bass</p></div>
<div class="c" style="top:644px;left:832px;width:739px;background:#108845"><p style="width:332px;background:#12382a">Потап и Насия для Блегнерго-2016- - Nexus.64 13</p></div>
<div class="c" style="top:659px;left:832px;width:739px;background:#107a55"><p style="width:315px;background:#12382a">Потап и Насия для Блегнерго-2016- - DUNE 2 2</p></div>
<div class="c st" style="top:674px;left:832px;width:739px;background-color:#2f7a22"><p style="width:310px;background:#14321a">Потап и Насия для Блегнерго-2016- - Spire-1.1</p></div>
<div class="c" style="top:689px;left:832px;width:739px;background:#6b9c0c"><p style="width:325px;background:#2a3a14">Потап и Насия для Блегнерго-2016- - Kontakt 5 2</p></div>
<div class="c" style="top:704px;left:832px;width:739px;background:#6e9060"><p style="width:313px;background:#1f3a2a">Потап и Насия для Блегнерго-2016- - DUNE 2 3</p></div>
<div class="c st" style="top:719px;left:832px;width:739px;background-color:#82996f"><p style="width:313px;background:#2a3030">Потап и Насия для Блегнерго-2016- - DUNE 2 4</p></div>
<div class="c" style="top:734px;left:832px;width:739px;background:#9a7a3a"><p style="width:429px;background:#3a3a20">Потап и Насия для Блегнерго-2016- - Electric Drums 003 110bpm</p></div>
<div class="c" style="top:749px;left:832px;width:739px;background:#8a7a50"><p style="width:429px;background:#33341f">Потап и Насия для Блегнерго-2016- - Electric Drums 005 070bpm</p></div>
<div class="c st" style="top:764px;left:832px;width:739px;background-color:#5f8050"><p style="width:298px;background:#1f3320">Потап и Насия для Блегнерго-2016- - Mai Tai</p></div>
<div class="c" style="top:779px;left:832px;width:739px;background:#949408"><p style="width:384px;background:#33331a">Потап и Насия для Блегнерго-2016- - PS01 - Keyboards.64</p></div>

<!-- grid overlay -->
<div class="g" style="left:776px"></div><div class="g" style="left:895px"></div><div class="g" style="left:1013px"></div><div class="g" style="left:1132px"></div><div class="g" style="left:1251px"></div><div class="g" style="left:1370px"></div><div class="g" style="left:1489px"></div>
<div class="g h" style="left:717px"></div><div class="g h" style="left:836px"></div><div class="g h" style="left:955px"></div><div class="g h" style="left:1073px"></div><div class="g h" style="left:1192px"></div><div class="g h" style="left:1311px"></div><div class="g h" style="left:1430px"></div><div class="g h" style="left:1549px"></div>
<div class="a" style="left:657px;top:72px;width:1px;height:772px;background:#50565a"></div>
<div class="a" style="left:831px;top:72px;width:1px;height:772px;background:#e6e8ea"></div>

<!-- arrange scrollbars -->
<div class="a" style="left:1571px;top:73px;width:21px;height:771px;background:#2a2d31"></div>
<div class="a" style="left:1579px;top:231px;width:7px;height:591px;background:#55636b"></div>
<div class="a" style="left:1577px;top:80px;width:0;height:0;border-left:5.500px solid transparent;border-right:5.500px solid transparent;border-bottom:8px solid #55636b"></div>
<div class="a" style="left:1577px;top:828px;width:0;height:0;border-left:5.500px solid transparent;border-right:5.500px solid transparent;border-top:8px solid #55636b"></div>
<div class="a" style="left:657px;top:844px;width:935px;height:21px;background:#2a2d31"></div>
<div class="a" style="left:666px;top:849px;width:0;height:0;border-right:7px solid #55636b;border-top:6px solid transparent;border-bottom:6px solid transparent"></div>
<div class="a" style="left:688px;top:851px;width:123px;height:8px;background:#55636b"></div>
<div class="a" style="left:1419px;top:849px;width:0;height:0;border-left:7px solid #55636b;border-top:6px solid transparent;border-bottom:6px solid transparent"></div>
<svg class="a" style="left:1438px;top:846px" width="154" height="19" viewBox="1438 846 154 19"><path d="M1440 858L1446 850 1452 858Z" fill="#727a7e"/><path d="M1456 853.500H1460M1468 853.500H1538" stroke="#727a7e" stroke-width="2"/><rect x="1461" y="847" width="5" height="13" fill="#727a7e"/><path d="M1544 858L1553 846 1562 858Z" fill="#727a7e"/><rect x="1577" y="847" width="9" height="4" fill="#d28a1e"/><rect x="1572" y="854" width="6" height="3" fill="#d28a1e"/><rect x="1572" y="859" width="6" height="3" fill="#d28a1e"/></svg>

<!-- browser -->
<div class="a" style="left:1600px;top:32px;width:296px;height:39px;background:#2a2d31"></div>
<div class="a" style="left:1600px;top:69px;width:296px;height:2px;background:#141617"></div>
<svg class="a" style="left:1605px;top:43px" width="20" height="18"><path d="M2 9L9.500 2 17 9H15V16H11V11H8V16H4V9Z" fill="#b5b9bc"/></svg>
<div class="a" style="left:1720px;top:34px;width:58px;height:37px;background:#4d5256"></div>
<div class="hd" style="left:1638px;color:#b5babd">Instruments</div>
<div class="hd" style="left:1727px;color:#f0f2f4">Effects</div>
<div class="hd" style="left:1787px;color:#b5babd">Loops</div>
<div class="hd" style="left:1835px;color:#b5babd">Files</div>
<div class="dd" style="left:1870px;top:49px;border-top-color:#6c7276"></div>
<div class="a" style="left:1891px;top:45px;width:10px;height:10px;border-radius:50%;border:2px solid #a9adb0"></div>
<div class="a" style="left:1600px;top:71px;width:296px;height:25px;background:#4d5256"></div>
<div class="so" style="left:1605px;color:#b0b5b8">Sort by:</div>
<div class="so" style="left:1678px;color:#f0f2f4">Flat</div>
<div class="so" style="left:1716px">Folder</div>
<div class="so" style="left:1771px">Vendor</div>
<div class="so" style="left:1825px;width:17px;overflow:hidden">Type</div>
<div class="dd" style="left:1846px;top:81px;border-top-color:#7f868a"></div>
<svg class="a" style="left:1867px;top:76px;fill:#c5c9cc" width="15" height="15"><use href="#wr"/></svg>
<div class="a" style="left:1893px;top:78px;width:6px;height:13px;border:2px solid #b5babd"></div>

<div id="list"><div style="margin-top:-13px">
<div class="it ar"><i class="fx">FX<s>x3</s></i>4020 Retro EQ</div>
<div class="it ar"><i class="fx">FX<s>x3</s></i>4030 Retro Comp</div>
<div class="it ar"><i class="fx">FX<s>x3</s></i>4040 Retro Limiter</div>
<div class="it ar"><i class="fx">FX<s>x3</s></i>6020 Ultimate EQ</div>
<div class="it ar"><i class="fx">FX<s>x3</s></i>6030 Ultimate Comp</div>
<div class="it"><span class="a" style="left:5px;top:0;color:#e6e8ea;font-size:15px">★</span><i class="fx">FX<s>VST</s></i>A.O.M. Invisible Limiter LL.64</div>
<div class="it"><i class="fx">FX<s>x3</s></i>Abbey Road Plates Mono</div>
<div class="it"><i class="fx">FX<s>x3</s></i>Abbey Road Plates Mono/Stereo</div>
<div class="it ar"><i class="fx">FX<s>x3</s></i>Abbey Road Plates Stereo</div>
<div class="it"><i class="fx">FX<s>x3</s></i>Abbey Road RS127 Box</div>
<div class="it"><i class="fx">FX<s>x3</s></i>Abbey Road RS127 Rack</div>
<div class="it"><i class="fx">FX<s>x3</s></i>Abbey Road RS135</div>
<div class="it"><i class="fx">FX<s>VST</s></i>accusonus ERA-D</div>
<div class="it"><i class="fx">FX<s>x3</s></i>Acoustic Feedback</div>
<div class="it"><i class="fx">FX<s>x3</s></i>Active Equalizer</div>
<div class="it ar"><i class="fx">FX<s>x3</s></i>AE400 Active EQ</div>
<div class="it"><i class="fx">FX<s>VST</s></i>AIRChorus_x64</div>
<div class="it"><i class="fx">FX<s>VST</s></i>AIRCompressor_x64</div>
<div class="it"><i class="fx">FX<s>VST</s></i>AIRDiffuserDelay_x64</div>
<div class="it"><i class="fx">FX<s>VST</s></i>AIRDistortion_x64</div>
<div class="it"><i class="fx">FX<s>VST</s></i>AIRDynamicDelay_x64</div>
<div class="it"><i class="fx">FX<s>VST</s></i>AIREnhancer_x64</div>
<div class="it"><i class="fx">FX<s>VST</s></i>AIREnsemble_x64</div>
<div class="it"><i class="fx">FX<s>VST</s></i>AIRFilterGate_x64</div>
<div class="it"><i class="fx">FX<s>VST</s></i>AIRFlanger_x64</div>
<div class="it"><i class="fx">FX<s>VST</s></i>AIRFrequencyShifter_x64</div>
</div></div>
<div class="a" style="left:1891px;top:96px;width:5px;height:623px;background:#2a2d31"></div>
<div class="a" style="left:1600px;top:719px;width:296px;height:146px;background:#2a2d31"></div>
<div class="a" style="left:1609px;top:724px;width:0;height:0;border-right:7px solid #55636b;border-top:6px solid transparent;border-bottom:6px solid transparent"></div>
<div class="a" style="left:1631px;top:726px;width:187px;height:7px;background:#55636b"></div>
<div class="a" style="left:1875px;top:724px;width:0;height:0;border-left:7px solid #55636b;border-top:6px solid transparent;border-bottom:6px solid transparent"></div>
<svg class="a" style="left:1611px;top:758px" width="34" height="28"><path d="M1 5Q1 2 4 2H12Q15 2 16 5H32V26H1Z" fill="#c3cbd0"/><rect x="1" y="6" width="31" height="3" fill="#7c868c"/><rect x="1" y="18" width="31" height="8" fill="#f2f6f8"/></svg>
<div class="tr" style="left:1664px;top:751px;font-size:18px;line-height:20px;color:#eef0f2">Effects</div>
<div class="tr" style="left:1664px;top:774px;font-size:14px;color:#a5abae">Effects</div>

<!-- transport -->
<div class="a" style="left:15px;top:865px;width:1881px;height:58px;background:#141617"></div>
<svg class="a" style="left:0;top:865px" width="1896" height="60"><path d="M15 5H35L45 58H15Z" fill="#5c686e"/><path d="M1682 5H1896V60H1667Z" fill="#5c686e"/></svg>
<div class="vb" style="left:1695px;width:68px;background:#5c686e;border-left:1px solid #474f53">Edit</div>
<div class="vb" style="left:1765px;width:68px;background:#5c686e">Mix</div>
<div class="vb" style="left:1835px;width:61px;background:#4d84aa;border-bottom-color:#3f6e8e;text-align:left;padding-left:14px;overflow:hidden">Browse</div>

<svg class="a" style="left:0;top:865px" width="1896" height="60" viewBox="0 865 1896 60">
<path d="M102 883L107 888 102 893Z" fill="#43606a"/><path d="M136 883L132 888 136 893Z" fill="#43606a"/>
<circle cx="118" cy="888" r="8" fill="none" stroke="#8a9094" stroke-width="1.500"/><g fill="#8a9094"><circle cx="113" cy="887" r="1.300"/><circle cx="123" cy="887" r="1.300"/><circle cx="118" cy="892" r="1.300"/><circle cx="115" cy="884" r="1.300"/><circle cx="121" cy="884" r="1.300"/></g>
<g fill="#c5c9cc"><circle cx="265" cy="884" r="2"/><circle cx="272" cy="886" r="2"/><circle cx="277" cy="892" r="2"/><circle cx="278" cy="899" r="2"/><circle cx="274" cy="906" r="2"/><circle cx="268" cy="910" r="2"/><circle cx="261" cy="910" r="2"/><circle cx="255" cy="906" r="2"/><circle cx="252" cy="899" r="2"/><circle cx="252" cy="892" r="2"/><circle cx="257" cy="886" r="2"/></g>
<g fill="#c8ccd0"><path d="M691 888V904L678 896Z"/><path d="M727 888V904L716 896V904L705 896 716 888V896Z"/><path d="M745 888L756 896V888L767 896 756 904V896L745 904Z"/><path d="M778 888L791 896 778 904Z"/><path d="M809 888V904H808V888ZM824 888V904L812 896Z"/></g>
<rect x="850" y="882" width="25" height="25" fill="#2bafd8"/>
<path d="M898 882L919 895 898 907Z" fill="#c8ccd0"/><path d="M898 895H919L898 907Z" fill="#aeb2b4"/>
<circle cx="950" cy="895" r="12.500" fill="#c8ccd0"/><path d="M941 904A12.500 12.500 0 0 0 960 887Z" fill="#aeb2b4"/>
<path d="M994 906H990Q983 906 983 896 983 883 992 883H1011Q1021 883 1021 895 1021 906 1012 906H1006L1010 898M998 899L994 906" fill="none" stroke="#8a8f92" stroke-width="2"/>
<path d="M1206 884H1212L1216 888H1226M1206 889H1212" fill="none" stroke="#9ca2a5" stroke-width="1.300"/>
<path d="M1238 884V892M1241 888H1243M1246 885H1256V891H1246Z" fill="#9ca2a5" stroke="#9ca2a5"/>
<circle cx="1282" cy="886" r="5.500" fill="#7c8185"/>
<path d="M1333 883H1336L1342 893H1327Z" fill="#4ab8e0"/><path d="M1330 890L1340 884" stroke="#141617"/>
<path d="M1237 907H1259" stroke="#b01c1c" stroke-dasharray="2 1"/><rect x="1243" y="902" width="10" height="10" fill="#b01c1c"/><rect x="1242" y="901" width="2" height="12" fill="#b01c1c"/><rect x="1252" y="901" width="2" height="12" fill="#b01c1c"/>
<circle cx="1596" cy="907" r="5.500" fill="#4ab0e0"/><circle cx="1606" cy="907" r="5" fill="#141617" stroke="#4ab0e0" stroke-width="2"/>
</svg>
<svg class="a" style="left:1301px;top:881px;fill:#9ca2a5" width="13" height="13"><use href="#wr"/></svg>
<svg class="a" style="left:1207px;top:900px;fill:#9ca2a5" width="13" height="13"><use href="#wr"/></svg>
<div class="a" style="left:148px;top:880px;width:82px;height:6px;background:#2a2d30"></div>
<div class="a" style="left:148px;top:880px;width:5px;height:6px;background:#4ab0d8"></div>
<div class="a" style="left:148px;top:889px;width:82px;height:6px;background:#2a2d30"></div>
<div class="tr" style="left:152px;top:898px;font-size:13.500px;color:#a0a5aa">Performance</div>
<div class="tr" style="left:104px;top:901px;font-size:13.500px;color:#7a8288">MIDI</div>
<div class="tr" style="left:296px;top:880px;font-size:15px;color:#e0e3e5">44.1 kHz</div>
<div class="tr" style="left:296px;top:900px;font-size:14px;color:#d8dbdd">0.0 ms</div>
<div class="tr" style="left:381px;top:880px;font-size:16px;color:#d8dbdd">53:20 days</div>
<div class="tr" style="left:381px;top:900px;font-size:13.500px;color:#7f858a">Record Max</div>
<div class="tr" style="left:486px;top:880px;font-size:22px;letter-spacing:1px;line-height:20px;font-weight:bold;color:#d8dce0">00006.04.02.92</div>
<div class="tr" style="left:547px;top:900px;font-size:13.500px;color:#7f858a">Bars</div>
<div class="tr" style="left:1047px;top:879px;font-size:14px;font-weight:bold;color:#4c78a8">L</div>
<div class="tr" style="left:1047px;top:898px;font-size:14px;font-weight:bold;color:#4c78a8">R</div>
<div class="tr" style="left:1064px;top:879px;font-size:16px;color:#d5d8dc">00006.04.02.90</div>
<div class="tr" style="left:1064px;top:898px;font-size:16px;color:#d5d8dc">00085.02.01.05</div>
<div class="tr" style="left:1274px;top:901px;font-size:14px;color:#7b8085">Metronome</div>
<div class="tr" style="left:1365px;top:880px;font-size:16px;color:#e0e3e5;letter-spacing:1px">4 / 4</div>
<div class="tr" style="left:1366px;top:901px;font-size:14px;color:#8a8f92">Timing</div>
<div class="tr" style="left:1432px;top:880px;font-size:16px;color:#e0e3e5">93.00</div>
<div class="tr" style="left:1431px;top:900px;font-size:14px;color:#8a8f92">Tempo</div>
<div class="a" style="left:1498px;top:880px;width:84px;height:5px;background:#2a2d30"></div>
<div class="a" style="left:1498px;top:886px;width:84px;height:5px;background:#2a2d30"></div>
<div class="a" style="left:1498px;top:901px;width:84px;height:11px;background:repeating-linear-gradient(90deg,#2d3134 0 2px,#1a1c1e 2px 3px)"></div>
<div class="a" style="left:1498px;top:901px;width:54px;height:11px;background:repeating-linear-gradient(90deg,#5d9ac0 0 2px,#2d5e7e 2px 3px)"></div>
<div class="a" style="left:1552px;top:901px;width:2px;height:11px;background:#d5e0e6"></div>

<!-- window bottom -->
<div class="a" style="left:15px;top:922px;width:1881px;height:10px;background:#4a4e50"></div>
<div class="a" style="left:15px;top:927px;width:1881px;height:4px;background:#33373a"></div>
<div class="a" style="left:12px;top:931px;width:1884px;height:2px;background:#eef1f4"></div>
<div class="a" style="left:12px;top:933px;width:1884px;height:5px;background:#cfd7e4"></div>
<div class="a" style="left:12px;top:938px;width:1884px;height:2px;background:#555a5e"></div>
<div class="a" style="left:12px;top:940px;width:1884px;height:4px;background:#b9cfe2"></div>
<div class="a" style="left:84px;top:940px;width:58px;height:4px;background:#f2f4f6"></div><div class="a" style="left:154px;top:940px;width:66px;height:4px;background:#f2f4f6"></div><div class="a" style="left:224px;top:940px;width:66px;height:4px;background:#f2f4f6"></div><div class="a" style="left:294px;top:940px;width:66px;height:4px;background:#f2f4f6"></div><div class="a" style="left:364px;top:940px;width:66px;height:4px;background:#f2f4f6"></div><div class="a" style="left:434px;top:940px;width:66px;height:4px;background:#f2f4f6"></div><div class="a" style="left:504px;top:940px;width:66px;height:4px;background:#f2f4f6"></div>
<svg class="a" style="left:200px;top:921px" width="14" height="20"><path d="M2 1V15L5.500 12 8 18 11 17 8.500 11H13Z" fill="#f4f5f6" stroke="#111" stroke-width="1"/></svg>
</div>
</body></html>
